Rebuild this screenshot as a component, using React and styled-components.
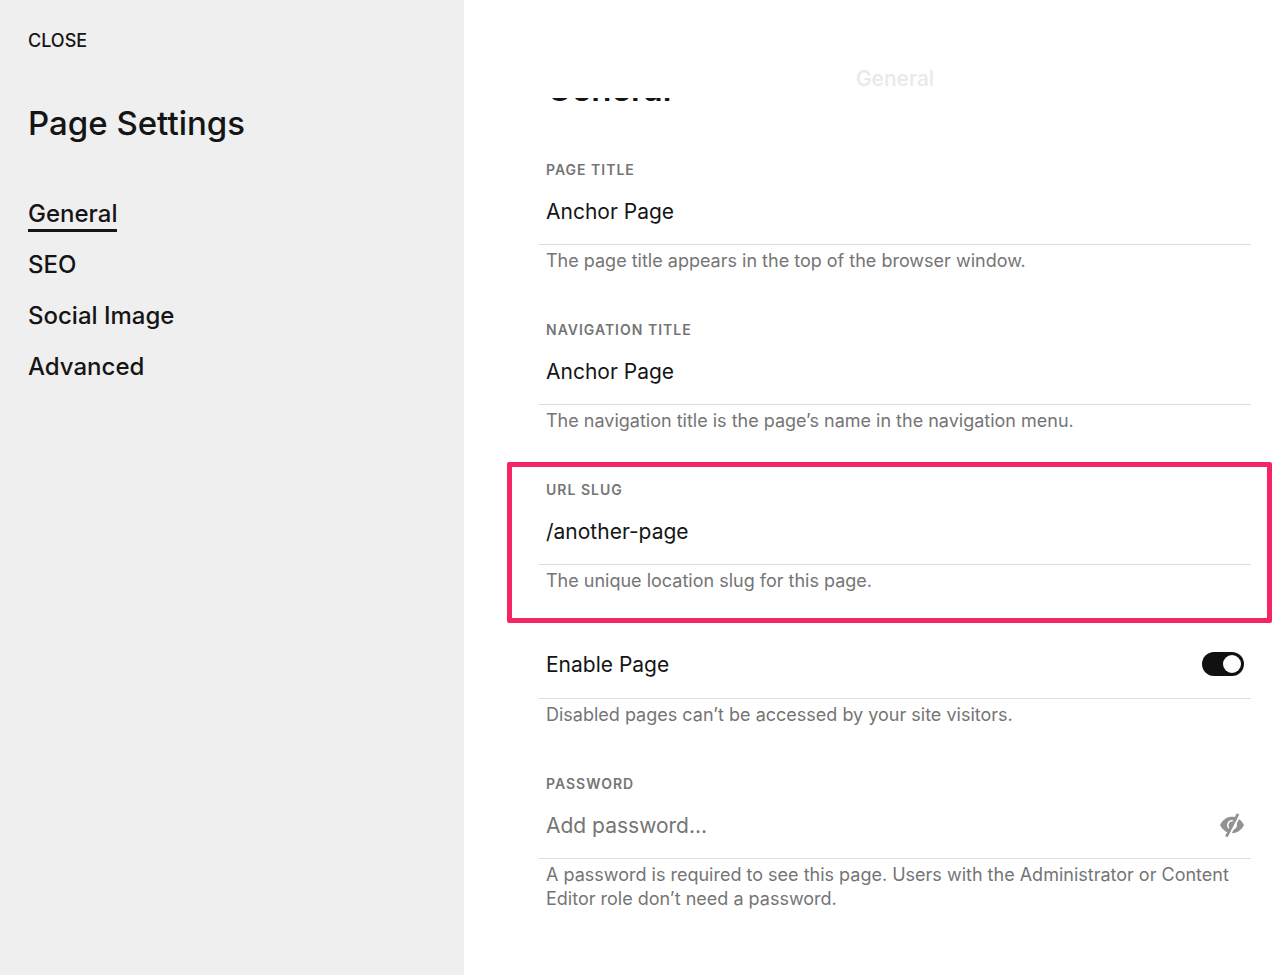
import React, { useState } from "react";
import styled, { createGlobalStyle, css } from "styled-components";

const GlobalStyle = createGlobalStyle`
  *, *::before, *::after { box-sizing: border-box; }
  body {
    margin: 0;
    background: #fff;
    color: #151515;
    font-family: Inter, "Liberation Sans", sans-serif;
  }
`;

const Layout = styled.div`
  display: grid;
  grid-template-columns: 29fr 51fr;
  min-height: 100vh;
`;

const Sidebar = styled.aside`
  display: flex;
  flex-direction: column;
  align-items: flex-start;
  padding: 29px 28px;
  background: #efefef;
`;

const CloseButton = styled.button`
  padding: 0;
  border: 0;
  background: none;
  color: inherit;
  font: 500 18px/24px Inter, sans-serif;
  cursor: pointer;
`;

const SidebarTitle = styled.h1`
  margin: 50px 0 49px;
  font-size: 33px;
  font-weight: 500;
  line-height: 40px;
`;

const Nav = styled.nav`
  display: flex;
  flex-direction: column;
  align-items: flex-start;
  gap: 11px;
`;

const NavLink = styled.a`
  height: 40px;
  border-bottom: 3px solid ${(p) => (p.$active ? "#151515" : "transparent")};
  color: inherit;
  font-size: 24px;
  font-weight: 500;
  line-height: 43px;
  text-decoration: none;
`;

const Main = styled.main`
  min-width: 0;
`;

const TopBar = styled.header`
  position: relative;
  z-index: 1;
  height: 98px;
  padding: 67px 29px 0 75px;
  background: #fff;
  color: #e9e9e9;
  font-size: 21px;
  font-weight: 500;
  line-height: 24px;
  text-align: center;
`;

const Form = styled.form`
  padding: 0 29px 48px 75px;
`;

const FormTitle = styled.h2`
  margin: -32px 0 48px;
  padding-left: 8px;
  font-size: 33px;
  font-weight: 600;
  line-height: 46px;
`;

const Field = styled.div`
  position: relative;
  margin-bottom: ${(p) => (p.$highlighted ? 39 : 47)}px;

  ${(p) =>
    p.$highlighted &&
    css`
      &::after {
        content: "";
        position: absolute;
        inset: -18px -21px -30px -32px;
        border: 5px solid #f52465;
        border-radius: 2px;
        pointer-events: none;
      }
    `}
`;

const Label = styled.label`
  display: block;
  padding-left: 7px;
  color: #757575;
  font-size: 14px;
  font-weight: 600;
  line-height: 20px;
  letter-spacing: 1px;
  text-transform: uppercase;
`;

const Control = styled.div`
  display: flex;
  align-items: center;
  justify-content: space-between;
  height: ${(p) => (p.$tall ? 67 : 65)}px;
  padding: 0 7px ${(p) => (p.$tall ? 0 : 2)}px 7px;
  border-bottom: 1px solid #dedede;
`;

const TextInput = styled.input`
  flex: 1;
  min-width: 0;
  height: 40px;
  padding: 0;
  border: 0;
  outline: 0;
  background: none;
  color: #151515;
  font: 400 21px/24px Inter, sans-serif;

  &::placeholder { color: #757575; opacity: 1; }
`;

const ToggleLabel = styled.label`
  font-size: 21px;
  line-height: 24px;
`;

const Toggle = styled.input`
  display: flex;
  align-items: center;
  width: 42px;
  height: 24px;
  margin: 0 0 2px;
  padding: 3px;
  border-radius: 12px;
  background: #b5b5b5;
  appearance: none;
  cursor: pointer;

  &::before {
    content: "";
    width: 18px;
    height: 18px;
    border-radius: 50%;
    background: #fff;
  }

  &:checked {
    justify-content: flex-end;
    background: #111;
  }
`;

const IconButton = styled.button`
  display: flex;
  padding: 0;
  border: 0;
  background: none;
  color: #929292;
  cursor: pointer;
`;

const Help = styled.p`
  margin: 4px 0 0;
  padding: 0 7px;
  color: #757575;
  font-size: 18px;
  line-height: 24px;
`;

function HiddenEyeIcon() {
  return (
    <svg width="24" height="24" viewBox="0 0 24 24" aria-hidden="true">
      <path
        fill="currentColor"
        fillRule="evenodd"
        d="M0 12C3 6.400 7.200 3.800 12 3.800S21 6.400 24 12C21 17.600 16.800 20.200 12 20.200S3 17.600 0 12ZM12 7A5 5 0 1 0 12 17A5 5 0 1 0 12 7Z"
      />
      <path fill="currentColor" d="M12 8.600A3.500 3.500 0 0 0 8.600 12.500L9.500 15.500L14 9.100Z" />
      <path d="M20.200 1.600L8.800 24" stroke="#fff" strokeWidth="2" />
      <path d="M18 .8L6.400 23.600" stroke="currentColor" strokeWidth="2.800" />
    </svg>
  );
}

function TextField({ id, label, help, highlighted, action, ...inputProps }) {
  return (
    <Field $highlighted={highlighted}>
      <Label htmlFor={id}>{label}</Label>
      <Control>
        <TextInput id={id} aria-describedby={`${id}-help`} {...inputProps} />
        {action}
      </Control>
      <Help id={`${id}-help`}>{help}</Help>
    </Field>
  );
}

const sections = ["General", "SEO", "Social Image", "Advanced"];

export default function App() {
  const [showPassword, setShowPassword] = useState(false);

  return (
    <>
      <GlobalStyle />
      <Layout>
        <Sidebar>
          <CloseButton type="button">CLOSE</CloseButton>
          <SidebarTitle>Page Settings</SidebarTitle>
          <Nav>
            {sections.map((name, i) => (
              <NavLink key={name} href="#" $active={i === 0}>
                {name}
              </NavLink>
            ))}
          </Nav>
        </Sidebar>
        <Main>
          <TopBar>General</TopBar>
          <Form>
            <FormTitle>General</FormTitle>
            <TextField
              id="page-title"
              label="Page Title"
              defaultValue="Anchor Page"
              help="The page title appears in the top of the browser window."
            />
            <TextField
              id="nav-title"
              label="Navigation Title"
              defaultValue="Anchor Page"
              help="The navigation title is the page’s name in the navigation menu."
            />
            <TextField
              id="slug"
              label="URL Slug"
              defaultValue="/another-page"
              help="The unique location slug for this page."
              highlighted
            />
            <Field>
              <Control $tall>
                <ToggleLabel htmlFor="enabled">Enable Page</ToggleLabel>
                <Toggle id="enabled" type="checkbox" role="switch" defaultChecked />
              </Control>
              <Help>Disabled pages can’t be accessed by your site visitors.</Help>
            </Field>
            <TextField
              id="password"
              label="Password"
              type={showPassword ? "text" : "password"}
              autoComplete="off"
              placeholder="Add password..."
              help="A password is required to see this page. Users with the Administrator or Content Editor role don’t need a password."
              action={
                <IconButton
                  type="button"
                  aria-label="Show password"
                  onClick={() => setShowPassword(!showPassword)}
                >
                  <HiddenEyeIcon />
                </IconButton>
              }
            />
          </Form>
        </Main>
      </Layout>
    </>
  );
}
